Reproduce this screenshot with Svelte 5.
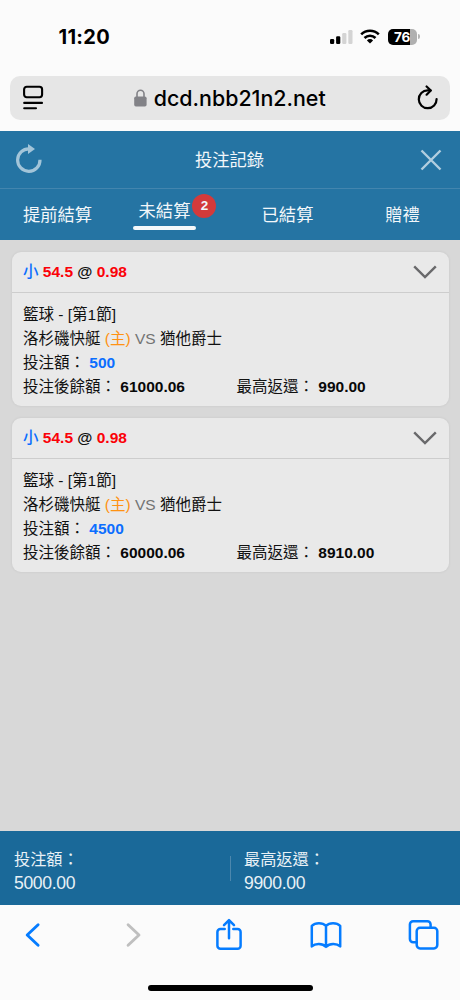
<script lang="ts">
type Bet = {
	id: number;
	pick: string;
	line: string;
	odds: string;
	league: string;
	home: string;
	away: string;
	stake: string;
	balance: string;
	payout: string;
};

const tabs = [
	{ key: "early", label: "提前結算" },
	{ key: "open", label: "未結算", count: 2 },
	{ key: "settled", label: "已結算" },
	{ key: "gift", label: "贈禮" },
];

const bets: Bet[] = [
	{
		id: 1,
		pick: "小",
		line: "54.5",
		odds: "0.98",
		league: "籃球 - [第1節]",
		home: "洛杉磯快艇",
		away: "猶他爵士",
		stake: "500",
		balance: "61000.06",
		payout: "990.00",
	},
	{
		id: 2,
		pick: "小",
		line: "54.5",
		odds: "0.98",
		league: "籃球 - [第1節]",
		home: "洛杉磯快艇",
		away: "猶他爵士",
		stake: "4500",
		balance: "60000.06",
		payout: "8910.00",
	},
];

let active = $state("open");
let collapsed = $state<number[]>([]);

function toggle(id: number) {
	collapsed = collapsed.includes(id)
		? collapsed.filter((item) => item !== id)
		: [...collapsed, id];
}
</script>

<div class="phone" lang="zh-Hant">
	<div class="status">
		<span class="time">11:20</span>
		<div class="signals">
			<svg width="23" height="16" viewBox="0 0 23 16">
				<rect x="0" y="10" width="4.2" height="5" rx="1.2" fill="#000" />
				<rect x="6.1" y="7.3" width="4.2" height="7.7" rx="1.2" fill="#000" />
				<rect x="12.2" y="4" width="4.2" height="11" rx="1.2" fill="#d4d4d4" />
				<rect x="18.3" y="1" width="4.2" height="14" rx="1.2" fill="#d4d4d4" />
			</svg>
			<svg class="wifi" width="20" height="15" viewBox="0 0 20 15">
				<g fill="none" stroke="#000" stroke-width="2.6">
					<path d="M1.2 5.4A12.6 12.6 0 0 1 18.8 5.4" />
					<path d="M4.5 9A7.8 7.8 0 0 1 15.5 9" />
				</g>
				<path d="M10 14.6 6.9 11.4a4.4 4.4 0 0 1 6.2 0Z" />
			</svg>
			<div class="battery"><span>76</span></div>
			<i class="battery-cap"></i>
		</div>
	</div>

	<div class="address">
		<svg width="22" height="26" viewBox="0 0 22 26" fill="none" stroke="#000" stroke-width="2.1" stroke-linecap="round">
			<rect x="2.1" y="1.8" width="18" height="10.4" rx="2.6" />
			<path d="M2.2 17.9H20M2.2 23.2H14" />
		</svg>
		<div class="host">
			<svg width="13" height="18" viewBox="0 0 13 18">
				<path d="M3 8V4.7a3.5 3.5 0 0 1 7 0V8" fill="none" stroke="#828287" stroke-width="1.6" />
				<rect x="0.2" y="7.5" width="12.4" height="10" rx="1.7" fill="#828287" />
			</svg>
			<span>dcd.nbb21n2.net</span>
		</div>
		<svg width="22" height="26" viewBox="0 0 22 26" fill="none" stroke="#000" stroke-width="2.2" stroke-linecap="round" stroke-linejoin="round">
			<path d="M13.4 5.4H10.6A8.9 8.9 0 1 0 19.6 14.1" />
			<path d="M9.6 1.5 13.8 5.5 9.6 9.7" />
		</svg>
	</div>

	<header>
		<div class="titlebar">
			<svg width="28" height="32" viewBox="0 0 28 32">
				<path d="M14.3 4.9A11.2 11.2 0 1 0 25 15.7" fill="none" stroke="#a3c5d9" stroke-width="3.2" />
				<path d="M13 0 20 4.9 13 10Z" fill="#a3c5d9" />
			</svg>
			<h1>投注記錄</h1>
			<svg width="22" height="22" viewBox="0 0 22 22">
				<path d="M1.5 1.5 20.5 20.5M20.5 1.5 1.5 20.5" stroke="#b2cedf" stroke-width="2.4" />
			</svg>
		</div>
		<nav>
			{#each tabs as tab (tab.key)}
				<button class:active={active === tab.key} onclick={() => (active = tab.key)}>
					<span class="tab-label">
						{tab.label}
						{#if tab.count}<b class="badge">{tab.count}</b>{/if}
					</span>
				</button>
			{/each}
		</nav>
	</header>

	<main>
		{#each bets as bet (bet.id)}
			<article>
				<button class="card-head" onclick={() => toggle(bet.id)}>
					<span class="odds">
						<span class="blue">{bet.pick}</span>
						<span class="red">{bet.line}</span>
						@
						<span class="red">{bet.odds}</span>
					</span>
					<svg width="24" height="14" viewBox="0 0 24 14">
						<path d="M1.2 1.3 12 12 22.8 1.3" fill="none" stroke="#69696b" stroke-width="2.4" />
					</svg>
				</button>
				{#if !collapsed.includes(bet.id)}
					<div class="card-body">
						<div>{bet.league}</div>
						<div>
							{bet.home} <span class="host-mark">(主)</span>
							<span class="versus">VS</span>
							{bet.away}
						</div>
						<div>投注額： <b class="blue">{bet.stake}</b></div>
						<div class="split">
							<span>投注後餘額： <b>{bet.balance}</b></span>
							<span>最高返還： <b>{bet.payout}</b></span>
						</div>
					</div>
				{/if}
			</article>
		{/each}
	</main>

	<footer>
		<div class="total">
			<span>投注額：</span>
			<span class="amount">5000.00</span>
		</div>
		<div class="total">
			<span>最高返還：</span>
			<span class="amount">9900.00</span>
		</div>
	</footer>

	<div class="toolbar">
		<div class="tools">
			<svg width="34" height="34" viewBox="0 0 34 34">
				<path d="M22.1 6.7 11.2 17 22.1 27.3" stroke-width="2.9" />
			</svg>
			<svg class="muted" width="34" height="34" viewBox="0 0 34 34">
				<path d="M14.1 6.7 25 17 14.1 27.3" stroke-width="2.9" />
			</svg>
			<svg width="34" height="34" viewBox="0 0 34 34">
				<path d="M12.7 11.1H8.4a3 3 0 0 0-3 3V27.7a3 3 0 0 0 3 3H25.6a3 3 0 0 0 3-3V14.1a3 3 0 0 0-3-3H21.3" />
				<path d="M17 20.2V2.3M12 7.2 17 2.1 22 7.2" />
			</svg>
			<svg width="34" height="34" viewBox="0 0 34 34">
				<path d="M17 7.8C13.4 4.3 6.3 4.5 2.8 7.8V28.4C6.3 25.2 13.4 25.2 17 28.8 20.6 25.2 27.7 25.2 31.2 28.4V7.8C27.7 4.5 20.6 4.3 17 7.8ZM17 7.8V28.8" />
			</svg>
			<svg width="34" height="34" viewBox="0 0 34 34">
				<rect x="9.7" y="9.8" width="20.6" height="20.6" rx="3.3" />
				<path d="M9.7 24.2H6.1a3.2 3.2 0 0 1-3.2-3.2V6.5a3.2 3.2 0 0 1 3.2-3.2H20.4a3.2 3.2 0 0 1 3.2 3.2V9.8" />
			</svg>
		</div>
		<div class="home-bar"></div>
	</div>
</div>

<style>
	:global(body) {
		margin: 0;
		background: #fbfbfb;
	}

	.phone {
		display: flex;
		flex-direction: column;
		width: 460px;
		height: 1000px;
		overflow: hidden;
		background: #fbfbfb;
		font-family: "Liberation Sans", "Noto Sans CJK TC", sans-serif;
		color: #111;
	}

	svg {
		display: block;
		flex: none;
	}

	button {
		padding: 0;
		border: 0;
		background: none;
		color: inherit;
		font: inherit;
	}

	.status {
		display: flex;
		align-items: center;
		justify-content: space-between;
		box-sizing: border-box;
		height: 76px;
		padding: 0 40px 3px 58.5px;
	}

	.time {
		padding-top: 1px;
		font-family: Inter, sans-serif;
		font-size: 20px;
		font-weight: 700;
		letter-spacing: 0.3px;
		color: #000;
	}

	.signals {
		display: flex;
		align-items: center;
	}

	.wifi {
		margin: 0 8px 0 7.5px;
	}

	.battery {
		width: 29px;
		height: 16px;
		border-radius: 5px;
		background: linear-gradient(90deg, #000 76%, #b0b0b0 76%);
		color: #fff;
		font: 700 13.5px/16.5px Inter, sans-serif;
		letter-spacing: -0.3px;
		text-align: center;
	}

	.battery span {
		margin-right: 1px;
	}

	.battery-cap {
		width: 2px;
		height: 5px;
		margin-left: 1px;
		border-radius: 0 2px 2px 0;
		background: #b5b5b5;
	}

	.address {
		display: flex;
		align-items: center;
		justify-content: space-between;
		height: 44px;
		margin: 0 10px 11px;
		padding: 0 11px 0 12px;
		box-sizing: border-box;
		border-radius: 10px;
		background: #e6e6e6;
	}

	.host {
		display: flex;
		align-items: center;
		gap: 6.5px;
		padding-right: 1px;
		color: #000;
		font: 550 21.4px/26px Inter, sans-serif;
	}

	header {
		flex: none;
		height: 109px;
		background: #2574a3;
		color: #f2f7fa;
		font-size: 17.3px;
	}

	.titlebar {
		display: flex;
		align-items: center;
		justify-content: space-between;
		box-sizing: border-box;
		height: 58px;
		padding: 0 18px 0 15px;
		border-bottom: 1px solid #4385ae;
	}

	h1 {
		margin: 0;
		padding: 0 4px 2px 0;
		font-size: inherit;
		font-weight: 400;
	}

	nav {
		display: grid;
		grid-template-columns: repeat(4, 115px);
		height: 51px;
	}

	nav button {
		display: flex;
		align-items: center;
		justify-content: center;
		padding-top: 1px;
	}

	nav button.active {
		align-items: flex-start;
		padding: 5px 16px 0 0;
	}

	.tab-label {
		position: relative;
		line-height: 34px;
	}

	.active .tab-label {
		padding: 0 5.5px;
	}

	.active .tab-label::after {
		content: "";
		display: block;
		height: 3.5px;
		margin: -2px -5.5px 0;
		border-radius: 2px;
		background: #f4f8fa;
	}

	.badge {
		position: absolute;
		top: 0;
		right: -20.5px;
		width: 24px;
		height: 24px;
		border-radius: 50%;
		background: #d33a3b;
		font-size: 13.5px;
		line-height: 24px;
		text-align: center;
	}

	main {
		flex: 1;
		display: flex;
		flex-direction: column;
		gap: 12px;
		padding: 12px 11.5px;
		background: #d8d8d8;
	}

	article {
		height: 154px;
		border-radius: 9px;
		background: #e9e9e9;
		box-shadow: 0 0 3px rgb(0 0 0 / 8%);
		font-size: 15.5px;
	}

	.card-head {
		display: flex;
		align-items: center;
		justify-content: space-between;
		box-sizing: border-box;
		width: 100%;
		height: 41px;
		padding: 0 11.5px;
		border-bottom: 1px solid #cdcdcd;
	}

	.odds {
		padding-bottom: 4px;
		font-weight: 700;
	}

	.odds .blue {
		font-weight: 500;
	}

	.blue {
		color: #0b6eff;
	}

	.red {
		color: #fb0007;
	}

	.card-body {
		padding: 9.5px 11.5px 0;
		line-height: 24px;
		white-space: nowrap;
	}

	.card-body > div {
		height: 24px;
	}

	.card-body b {
		color: #080808;
	}

	.card-body b.blue {
		color: #0b6eff;
	}

	.host-mark {
		color: #ff9212;
	}

	.versus {
		color: #737373;
	}

	.split {
		display: grid;
		grid-template-columns: 213.5px 1fr;
	}

	footer {
		display: flex;
		align-items: center;
		height: 74px;
		background: #1a6999;
		color: #e9f1f6;
	}

	.total {
		display: flex;
		flex-direction: column;
		box-sizing: border-box;
		width: 230px;
		padding: 5px 0 0 14px;
		font-size: 16.2px;
		line-height: 24px;
	}

	.total + .total {
		background: linear-gradient(#4c87ad, #4c87ad) 0 50% / 1px 25px no-repeat;
	}

	.amount {
		font-size: 17.6px;
		letter-spacing: -0.35px;
	}

	.toolbar {
		display: flex;
		flex-direction: column;
		justify-content: space-between;
		align-items: center;
		box-sizing: border-box;
		height: 95px;
		padding: 13px 0 9px;
	}

	.tools {
		display: flex;
		justify-content: space-between;
		box-sizing: border-box;
		width: 100%;
		padding: 0 19px 0 16px;
	}

	.tools svg {
		fill: none;
		stroke: #057cff;
		stroke-width: 2.5;
		stroke-linecap: round;
		stroke-linejoin: round;
	}

	.tools .muted {
		stroke: #bfbfbf;
	}

	.home-bar {
		width: 165px;
		height: 6px;
		border-radius: 3px;
		background: #000;
	}
</style>
